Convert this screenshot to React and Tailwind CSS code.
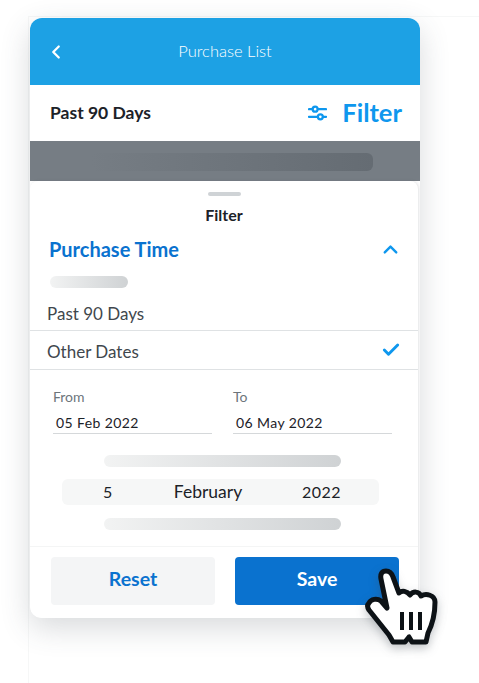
import { ChevronLeft, ChevronUp, Check } from 'lucide-react';

function SkeletonBar({ className }) {
  return <div className={`h-3 rounded-md bg-linear-to-r from-[#f2f3f3] to-[#cfd2d4] ${className}`} />;
}

function DateField({ label, value }) {
  return (
    <div className="w-[159px]">
      <div className="h-[19px] text-[14px] leading-[19px] text-[#6d757b]">{label}</div>
      <div className="mt-[6px] h-[22px] border-b border-[#d5d8da] pl-[3px] pt-[1px] text-[14px] leading-[20px] tracking-[0.4px] text-[#1c2228]">
        {value}
      </div>
    </div>
  );
}

function Hand() {
  return (
    <svg
      className="absolute left-[350px] top-[550px] drop-shadow-[0_4px_5px_rgba(60,70,80,0.3)]"
      width="100"
      height="110"
      viewBox="0 0 100 110"
      fill="none"
    >
      <path
        d="M19 53C21 49 27 48 31 51L37 58 31 29C30 24 32 21 36 21 40 21 42 24 43 27L49 43C52 40 57 41 60 45 63 41 69 41 71 46 76 43 85 45 85 52 85 65 82 75 78 83L76 92H62L59 87 55 92H43L39 85 19 60C17 57 17 55 19 53Z"
        fill="#fff"
        stroke="#0d1216"
        strokeWidth="5"
        strokeLinejoin="round"
      />
      <path d="M52 62v18M61 62v18M70 62v18" stroke="#0d1216" strokeWidth="4" />
    </svg>
  );
}

export default function App() {
  return (
    <div
      className="relative h-[683px] w-[479px] overflow-hidden bg-white pl-[30px] pt-[18px] text-[#1c2228]"
      style={{ fontFamily: 'Lato, "Noto Sans", sans-serif' }}
    >
      <div className="absolute bottom-0 left-[28px] right-0 top-[16px] border-l border-t border-[#f6f7f7]" />

      <div className="relative h-[600px] w-[390px] overflow-hidden rounded-[12px] bg-white shadow-[0_10px_30px_rgba(60,70,80,0.2)]">
        <div className="flex h-[67px] items-center bg-[#1da1e4] pl-[15px] text-white">
          <ChevronLeft size={22} strokeWidth={2.5} />
          <div className="ml-[68px] w-[180px] text-center text-[16.5px] font-light">Purchase List</div>
        </div>

        <div className="flex h-[56px] items-center justify-between pl-[20px] pr-[18px]">
          <div className="text-[17.5px] font-bold">Past 90 Days</div>
          <div className="flex items-center gap-[15px] text-[#0e97ee]">
            <svg width="19" height="18" viewBox="0 0 20 18" fill="none" stroke="currentColor" strokeWidth="2.4" strokeLinecap="round">
              <path d="M1 5h3M11 5h8M1 13h9M16 13h3" />
              <circle cx="7.5" cy="5" r="2.6" />
              <circle cx="13" cy="13" r="2.6" />
            </svg>
            <span className="text-[25.5px] font-bold leading-none">Filter</span>
          </div>
        </div>

        <div className="flex h-[40px] items-start bg-[#767d84] px-[1px] pt-[12px]">
          <div className="ml-[60px] h-[18px] w-[282px] rounded-md bg-linear-to-r from-[#767d84] to-[#656c73]" />
        </div>

        <div className="absolute inset-x-0 bottom-0 top-[163px] mr-[2px] rounded-t-[8px] bg-white shadow-[1px_0_3px_rgba(60,70,80,0.15)]">
          <div className="mx-auto mt-[11px] h-[4px] w-[33px] rounded-full bg-[#cfd3d6]" />
          <div className="mt-[9px] text-center text-[16px] font-bold leading-[20px]">Filter</div>

          <div className="mt-[9px] flex h-[30px] items-center justify-between pl-[19px] pr-[16px]">
            <div className="text-[20px] font-bold text-[#0a72cf]">Purchase Time</div>
            <ChevronUp size={23} strokeWidth={2.5} className="text-[#0e97ee]" />
          </div>

          <SkeletonBar className="ml-[20px] mt-[12px] w-[78px]" />

          <div className="flex h-[43px] items-end border-b border-[#dfe2e4] pb-[4px] pl-[17px] text-[17px] text-[#3f474d]">
            Past 90 Days
          </div>
          <div className="flex h-[39px] items-center justify-between border-b border-[#dfe2e4] pl-[17px] pr-[17px] pt-[3px] text-[17px] text-[#3f474d]">
            Other Dates
            <Check size={20} strokeWidth={3.5} className="-mt-[3px] text-[#0e97ee]" />
          </div>

          <div className="ml-[23px] mt-[17px] flex gap-[21px]">
            <DateField label="From" value="05 Feb 2022" />
            <DateField label="To" value="06 May 2022" />
          </div>

          <SkeletonBar className="ml-[74px] mt-[21px] w-[237px]" />

          <div className="ml-[32px] mt-[12px] grid h-[26px] w-[317px] grid-cols-[92px_108px_117px] items-center rounded-md bg-[#f6f7f7] text-[16px]">
            <div className="pl-[41px]">5</div>
            <div className="text-center text-[17.5px]">February</div>
            <div className="pl-[40px] tracking-[0.5px]">2022</div>
          </div>

          <SkeletonBar className="ml-[74px] mt-[13px] w-[237px]" />

          <div className="mt-[16px] flex gap-[20px] border-t border-[#f4f5f5] pl-[21px] pt-[10px]">
            <button className="h-[48px] w-[164px] rounded-[4px] bg-[#f4f5f6] pb-[4px] text-[19.5px] font-bold text-[#0a72cf]">Reset</button>
            <button className="h-[48px] w-[164px] rounded-[4px] bg-[#0a72cf] pb-[4px] text-[19.5px] font-bold text-white">Save</button>
          </div>
        </div>
      </div>

      <Hand />
    </div>
  );
}
